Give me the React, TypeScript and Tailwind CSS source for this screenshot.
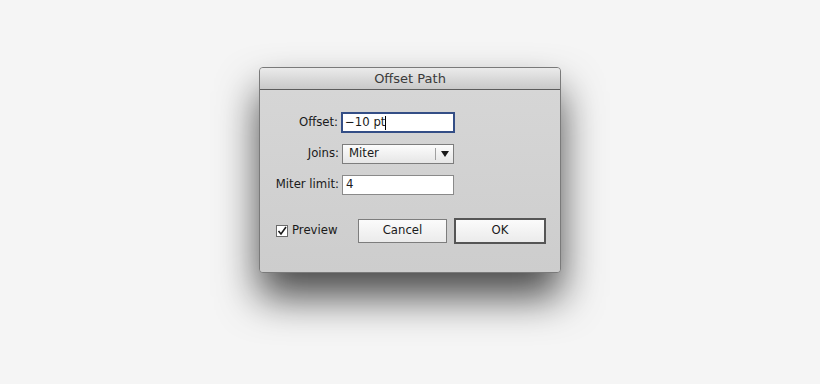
import React from "react";

export default function App() {
  const font = { fontFamily: '"DejaVu Sans", "Liberation Sans", sans-serif' };
  return (
    <div className="w-[820px] h-[384px] bg-[#f5f5f5] overflow-hidden pt-[67px]" style={font}>
      <div className="mx-auto w-[302px] h-[206px] rounded-[4px] border border-[#7a7a7a] bg-[#d0d0d0] shadow-[0_24px_40px_rgba(0,0,0,0.7)] flex flex-col overflow-hidden">
        <div className="h-[22px] border-b border-[#5c5c5c] bg-gradient-to-b from-[#ebebeb] to-[#c9c9c9] flex items-center justify-center text-[13px] text-[#3a3a3a]">
          Offset Path
        </div>
        <div className="flex-1 bg-gradient-to-b from-[#d6d6d6] to-[#cdcdcd] flex flex-col pt-[22px]">
          <div className="flex flex-col gap-[10px] text-[11.7px] text-[#1a1a1a]">
            <div className="flex items-center h-[21px]">
              <div className="w-[81px] text-right pr-[3px]">Offset:</div>
              <div className="w-[114px] h-[21px] border-2 border-[#344e86] bg-white flex items-center px-[2px]">
                <span>−10 pt</span>
                <span className="w-px h-[14px] bg-black"></span>
              </div>
            </div>
            <div className="flex items-center h-[21px]">
              <div className="w-[82px] text-right pr-[3px]">Joins:</div>
              <div className="w-[112px] h-[20px] border border-[#7d7d7d] bg-gradient-to-b from-[#fcfcfc] to-[#e6e6e6] flex items-center pl-[6px]">
                <span className="flex-1">Miter</span>
                <span className="w-px h-[12px] bg-[#a0a0a0]"></span>
                <span className="w-[17px] flex justify-center">
                  <svg width="8" height="6" viewBox="0 0 8 6"><path d="M0 0 H8 L4 6 Z" fill="#1a1a1a" /></svg>
                </span>
              </div>
            </div>
            <div className="flex items-center h-[21px]">
              <div className="w-[82px] text-right pr-[3px]">Miter limit:</div>
              <div className="w-[112px] h-[20px] border border-[#8a8a8a] bg-white flex items-center px-[3px]">4</div>
            </div>
          </div>
          <div className="flex items-center mt-[23px] text-[11.7px] text-[#1a1a1a]">
            <div className="flex items-center ml-[16px] w-[82px]">
              <div className="w-[12px] h-[12px] border border-[#6a6a6a] bg-white flex items-center justify-center">
                <svg width="10" height="10" viewBox="0 0 10 10"><path d="M1.5 5 L4 8 L9 1" fill="none" stroke="#1a1a1a" strokeWidth="1.6" /></svg>
              </div>
              <span className="ml-[4px]">Preview</span>
            </div>
            <div className="w-[89px] h-[24px] border border-[#7d7d7d] bg-gradient-to-b from-[#fbfbfb] to-[#ebebeb] flex items-center justify-center">Cancel</div>
            <div className="ml-[7px] w-[92px] h-[26px] border-2 border-[#555555] bg-gradient-to-b from-[#fbfbfb] to-[#ebebeb] flex items-center justify-center">OK</div>
          </div>
        </div>
      </div>
    </div>
  );
}
